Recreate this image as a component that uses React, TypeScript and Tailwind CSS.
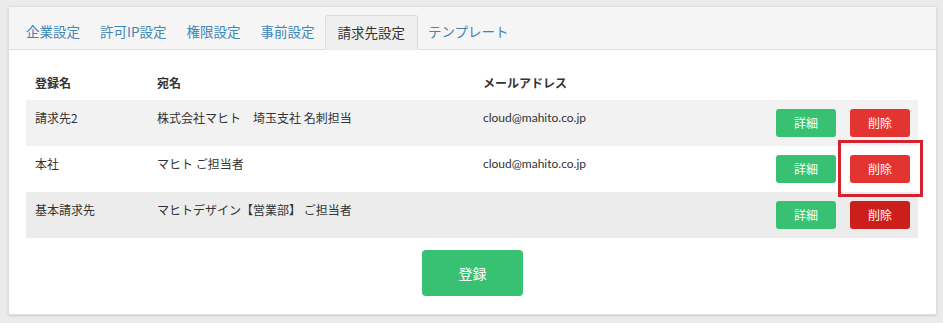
import React from 'react';

type Billing = {
    id: number;
    name: string;
    to: string;
    email: string;
    rowBg: string;
    deleteBg: string;
    highlight?: boolean;
};

const tabs = ['企業設定', '許可IP設定', '権限設定', '事前設定', '請求先設定', 'テンプレート'];

const rows: Billing[] = [
    { id: 1, name: '請求先2', to: '株式会社マヒト　埼玉支社 名刺担当', email: 'cloud@mahito.co.jp', rowBg: 'bg-[#f2f2f2]', deleteBg: 'bg-[#e3342f]' },
    { id: 2, name: '本社', to: 'マヒト ご担当者', email: 'cloud@mahito.co.jp', rowBg: 'bg-white', deleteBg: 'bg-[#e3342f]', highlight: true },
    { id: 3, name: '基本請求先', to: 'マヒトデザイン【営業部】 ご担当者', email: '', rowBg: 'bg-[#ececec]', deleteBg: 'bg-[#cc1f1a]' },
];

const App = () => {
    const active = '請求先設定';

    return (
        <div className="min-h-screen bg-[#ebebeb] pt-[6px] pl-2 pr-[6px] text-[#333] font-['Noto_Sans_CJK_JP','Noto_Sans',sans-serif]">
            <div className="bg-white border border-[#dedede] rounded-[2px] shadow-sm h-[309px] flex flex-col">
                {/* Tabs */}
                <div className="h-[43px] bg-[#f5f5f5] border-b border-[#dcdcdc] flex items-end pl-[7px] rounded-t-[2px]">
                    {tabs.map((tab) => (
                        <div
                            key={tab}
                            className={
                                tab === active
                                    ? 'h-[35px] -mb-px px-[12px] flex items-center text-[13.5px] bg-[#efefef] border border-[#dcdcdc] border-b-[#efefef] rounded-t-[3px] text-[#333]'
                                    : 'h-[35px] px-[10px] flex items-center text-[13.5px] text-[#3f86b5]'
                            }
                        >
                            {tab}
                        </div>
                    ))}
                </div>

                {/* Table */}
                <div className="pt-4 pl-[17px] pr-[18px]">
                    <table className="w-full border-collapse text-[12px] table-fixed">
                        <thead>
                            <tr className="h-[34px]">
                                <th className="w-[122px] pl-[9px] text-left font-bold align-middle">登録名</th>
                                <th className="w-[326px] pl-[9px] text-left font-bold align-middle">宛名</th>
                                <th className="pl-[9px] text-left font-bold align-middle">メールアドレス</th>
                                <th className="w-[160px]"></th>
                            </tr>
                        </thead>
                        <tbody>
                            {rows.map((row) => (
                                <tr key={row.id} className={`h-[46px] ${row.rowBg}`}>
                                    <td className="pl-[9px] pt-[9px] align-top">{row.name}</td>
                                    <td className="pl-[9px] pt-[9px] align-top whitespace-pre">{row.to}</td>
                                    <td className="pl-[9px] pt-[9px] align-top font-['Lato',sans-serif] text-[12px]">{row.email}</td>
                                    <td className="align-middle pr-2">
                                        <div className="flex justify-end gap-[14px]">
                                            <button className="w-[60px] h-[28px] rounded-[3px] bg-[#38c172] text-white text-[12px]">
                                                詳細
                                            </button>
                                            <div className="relative">
                                                <button className={`w-[60px] h-[28px] rounded-[3px] ${row.deleteBg} text-white text-[12px]`}>
                                                    削除
                                                </button>
                                                {row.highlight && (
                                                    <div className="absolute -left-[12px] -top-[15px] w-[85px] h-[57px] border-[3px] border-[#d7202d]" />
                                                )}
                                            </div>
                                        </div>
                                    </td>
                                </tr>
                            ))}
                        </tbody>
                    </table>
                </div>

                <div className="flex justify-center mt-3">
                    <button className="w-[101px] h-[46px] rounded-[4px] bg-[#38c172] text-white text-[14px]">
                        登録
                    </button>
                </div>
            </div>
        </div>
    );
};

export default App;
